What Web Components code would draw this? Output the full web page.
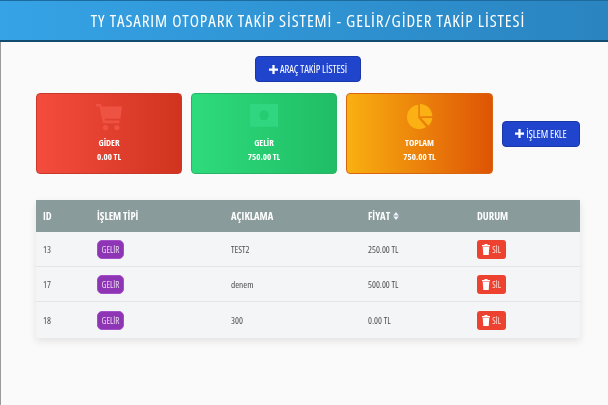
<!DOCTYPE html>
<html><head><meta charset="utf-8"><style>
html,body{margin:0;padding:0;background:#fafafb;height:405px;overflow:hidden;font-family:"Open Sans","Noto Sans",sans-serif;font-stretch:75%;color:#3d4548}
body{box-shadow:inset 1px 0 0 #9a9a9a}
</style></head><body>
<app-header>TY TASARIM OTOPARK TAKİP SİSTEMİ - GELİR/GİDER TAKİP LİSTESİ</app-header>
<app-main>
  <div style="display:flex;justify-content:center"><blue-btn style="width:106px;height:26px">ARAÇ TAKİP LİSTESİ</blue-btn></div>
  <div style="display:flex;align-items:center;gap:9px;margin-top:11px">
    <stat-card style="--a:#f44c3e;--b:#d0341f;--bd:#c9392a;--i:#ee5243;width:146px" icon="cart" label="GİDER" value="0.00 TL"></stat-card>
    <stat-card style="--a:#2edb7c;--b:#20bd65;--bd:#27b565;--i:#31d680;width:146px" icon="money" label="GELİR" value="750.00 TL"></stat-card>
    <stat-card style="--a:#f9b011;--b:#de5405;--bd:#d9660f;--i:#fbb014;width:147px" icon="pie" label="TOPLAM" value="750.00 TL"></stat-card>
    <blue-btn style="width:78px;height:26px">İŞLEM EKLE</blue-btn>
  </div>
  <data-table style="margin-top:26px">
    <table-row head id="ID" kind="İŞLEM TİPİ" desc="AÇIKLAMA" price="FİYAT" action="DURUM"></table-row>
    <table-row id="13" kind="GELİR" desc="TEST2" price="250.00 TL" h="35"></table-row>
    <table-row id="17" kind="GELİR" desc="denem" price="500.00 TL" h="35"></table-row>
    <table-row id="18" kind="GELİR" desc="300" price="0.00 TL" h="36" last></table-row>
  </data-table>
</app-main>
<script>
const plus='<svg width="9" height="9" viewBox="0 0 8 8" style="flex:none"><path d="M3 0h2v3h3v2H5v3H3V5H0V3h3z" fill="#fff"/></svg>';
const icons={
cart:'<svg viewBox="0 0 32 32"><path fill="var(--i)" d="M1 1h6l1 3h23l-2 14H11l.6 2H28v3H9L5 4H1z"/><circle cx="12" cy="28" r="3" fill="var(--i)"/><circle cx="25" cy="28" r="3" fill="var(--i)"/></svg>',
money:'<svg viewBox="0 0 32 32"><path fill-rule="evenodd" fill="var(--i)" d="M0 1h32v26H0zM16 8.500a5.500 5.500 0 1 0 .01 0z"/></svg>',
pie:'<svg viewBox="0 0 32 32"><g fill="var(--i)"><path d="M14 2V17L23 27.500A14 14 0 1 1 14 2z"/><path d="M16 1A14 14 0 0 1 30 15H16z"/><path d="M17.500 17H30A14 14 0 0 1 25.500 26z"/></g></svg>'
};
function def(n,html){customElements.define(n,class extends HTMLElement{connectedCallback(){if(this.shadowRoot)return;const s=this.attachShadow({mode:'open'});s.innerHTML=typeof html==='function'?html(this):html;}})}
def('app-header',`<style>:host{display:flex;align-items:center;justify-content:center;height:39px;box-sizing:content-box;padding-left:8px;background:linear-gradient(90deg,#35a3e6,#2a84c0);border-top:1px solid #1d6a9e;border-bottom:2px solid #124a70;color:#fff;font-size:17px;letter-spacing:.92px;white-space:nowrap;will-change:transform}</style><slot></slot>`);
def('app-main',`<style>:host{display:block;padding:14px 28px 0 36px;will-change:transform}</style><slot></slot>`);
def('blue-btn',`<style>:host{display:inline-flex;align-items:center;justify-content:center;gap:2px;box-sizing:border-box;background:#2045cc;border:1px solid #1a37a8;border-radius:4px;color:#fff;font-size:10.500px;letter-spacing:-.05px;white-space:nowrap}</style>${plus}<slot></slot>`);
def('stat-card',h=>`<style>:host{display:flex;flex-direction:column;align-items:center;box-sizing:border-box;height:81px;background:linear-gradient(90deg,var(--a),var(--b));border:1px solid var(--bd);border-radius:4px;color:#fff;font-weight:700;font-size:9px;text-align:center;padding-top:9px}
svg{display:block;height:28px;width:28px;margin-bottom:5px}div{line-height:13.500px}</style>${icons[h.getAttribute('icon')]}<div>${h.getAttribute('label')}</div><div>${h.getAttribute('value')}</div>`);
def('data-table',`<style>:host{display:block;box-shadow:0 3px 8px rgba(0,0,0,.1);background:#f4f5f7}</style><slot></slot>`);
def('pill-tag',`<style>:host{display:inline-flex;align-items:center;justify-content:center;width:27px;height:19px;background:#8e35b5;border:1px solid #a24fc8;box-sizing:border-box;border-radius:5px;color:#e9d8f0;font-size:9px}</style><slot></slot>`);
def('del-btn',`<style>:host{display:inline-flex;align-items:center;justify-content:center;gap:2px;width:29px;height:19px;background:#ee4230;border-radius:3px;color:#fde3df;font-size:8.500px}</style><svg width="8" height="11" viewBox="0 0 8 11"><path fill="#fff" d="M0 1h8v1.200H0zM2.500 0h3v1h-3zM.7 2.800h6.600L6.700 11H1.300z"/></svg><slot></slot>`);
def('table-row',h=>{const a=n=>h.getAttribute(n)||'';const head=h.hasAttribute('head');
const arrows='<svg width="6" height="8" viewBox="0 0 5 7" style="margin-left:3px"><path fill="#eef" d="M2.500 0 5 3H0zM0 4h5L2.500 7z"/></svg>';
return `<style>:host{display:grid;grid-template-columns:61px 134px 137px 109px 1fr;align-items:center;box-sizing:border-box;height:${head?32:a('h')}px;${head?'background:#8a9b9b;color:#fff;font-weight:700;font-size:10.500px;':'color:#4d4f50;font-size:9.300px;'}${head||h.hasAttribute('last')?'':'border-bottom:1px solid #e3e5e8;'}}
span{display:flex;align-items:center;white-space:nowrap}.first{padding-left:7px}</style>
<span class="first">${a('id')}</span><span>${head?a('kind'):`<pill-tag>${a('kind')}</pill-tag>`}</span><span>${a('desc')}</span><span>${a('price')}${head?arrows:''}</span><span>${head?a('action'):'<del-btn>SİL</del-btn>'}</span>`});
</script>
</body></html>
